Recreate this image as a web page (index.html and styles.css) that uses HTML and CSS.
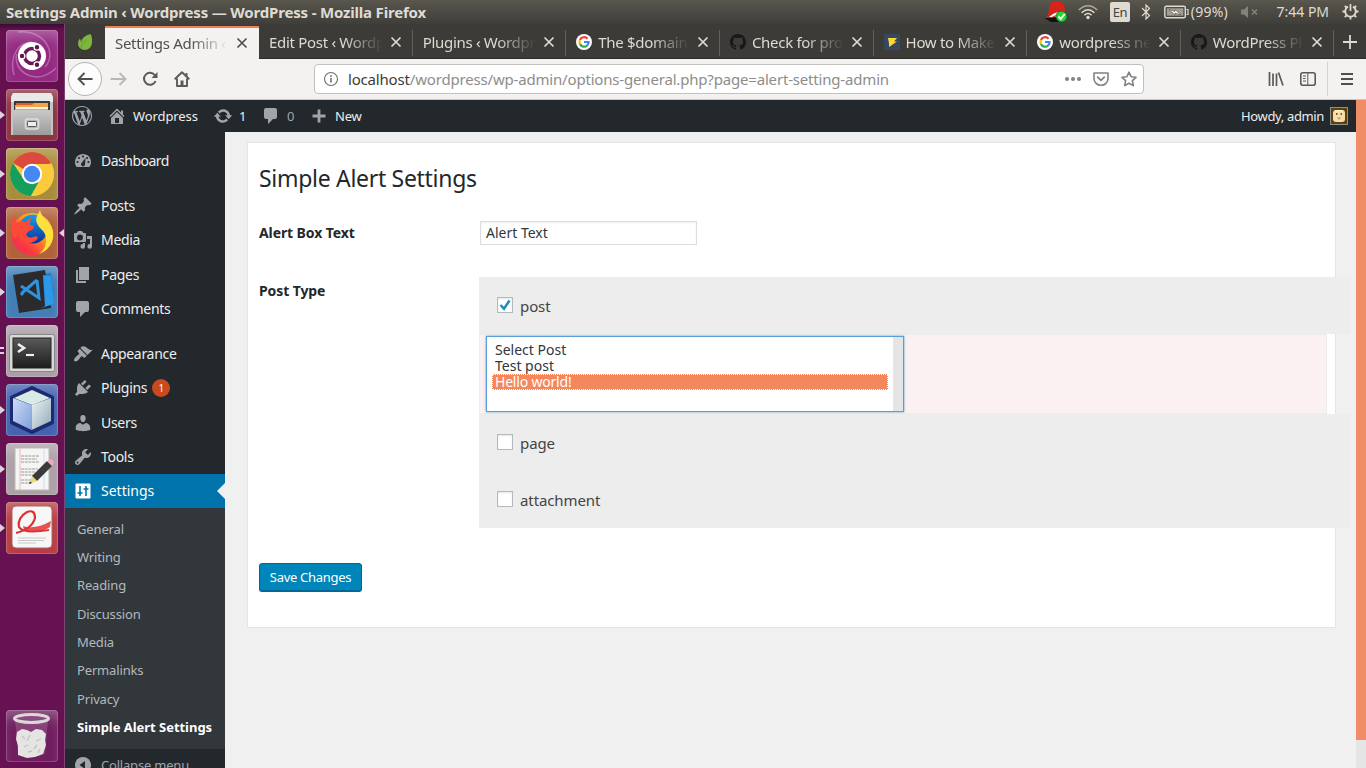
FILE: index.html
```html
<!DOCTYPE html>
<html lang="en">
<head>
<meta charset="utf-8">
<title>Settings Admin ‹ Wordpress — WordPress</title>
<link rel="stylesheet" href="styles.css">
</head>
<body>
<svg class="defs" width="0" height="0" aria-hidden="true">
  <defs>
    <linearGradient id="steel" x1="0" y1="0" x2="0" y2="1"><stop offset="0" stop-color="#c9c9c9"/><stop offset="1" stop-color="#9b9b9b"/></linearGradient>
    <linearGradient id="fox" x1="1" y1="0" x2="0" y2="1"><stop offset="0" stop-color="#fff14c"/><stop offset=".4" stop-color="#ff9a1e"/><stop offset=".7" stop-color="#fb3a3f"/><stop offset="1" stop-color="#f0246e"/></linearGradient>
    <linearGradient id="globe" x1="0" y1="0" x2="0" y2="1"><stop offset="0" stop-color="#18a0e8"/><stop offset="1" stop-color="#0b2f98"/></linearGradient>
    <linearGradient id="cube" x1="0" y1="0" x2="1" y2="1"><stop offset="0" stop-color="#cfdcf5"/><stop offset="1" stop-color="#7f9fdc"/></linearGradient>
    <linearGradient id="cube2" x1="0" y1="0" x2="1" y2="1"><stop offset="0" stop-color="#eef4f4"/><stop offset="1" stop-color="#8fa9b8"/></linearGradient>
    <linearGradient id="term" x1="0" y1="0" x2="0" y2="1"><stop offset="0" stop-color="#5a5a5a"/><stop offset="1" stop-color="#1d1d1d"/></linearGradient>
  </defs>
  <symbol id="i-close" viewBox="0 0 12 12"><path d="M1.500 1.500l9 9M10.500 1.500l-9 9" fill="none" stroke="currentColor" stroke-width="1.700"/></symbol>
  <symbol id="i-google" viewBox="0 0 16 16"><circle cx="8" cy="8" r="8" fill="#fff"/><g fill="none" stroke-width="2.200"><path d="M11.500 4.700A4.600 4.600 0 0 0 3.900 6" stroke="#ea4335"/><path d="M3.900 5.900a4.600 4.600 0 0 0 0 4.200" stroke="#fbbc05"/><path d="M3.900 10a4.600 4.600 0 0 0 7.300 1.500" stroke="#34a853"/><path d="M8 8h4.600a4.600 4.600 0 0 1-1.500 3.600" stroke="#4285f4"/></g></symbol>
  <symbol id="i-github" viewBox="0 0 16 16"><path fill="#191717" d="M8 0C3.580 0 0 3.580 0 8c0 3.540 2.290 6.530 5.470 7.590.4.07.55-.17.55-.38 0-.19-.01-.82-.01-1.490-2.010.37-2.530-.49-2.690-.94-.09-.23-.48-.94-.82-1.130-.28-.15-.68-.52-.01-.53.63-.01 1.080.58 1.230.82.72 1.210 1.870.87 2.330.66.07-.52.28-.87.51-1.070-1.780-.2-3.640-.89-3.640-3.950 0-.87.31-1.590.82-2.150-.08-.2-.36-1.020.08-2.120 0 0 .67-.21 2.200.82.64-.18 1.320-.27 2-.27.68 0 1.360.09 2 .27 1.530-1.040 2.200-.82 2.200-.82.44 1.100.16 1.920.08 2.120.51.56.82 1.270.82 2.150 0 3.070-1.870 3.750-3.650 3.950.29.25.54.73.54 1.480 0 1.070-.01 1.930-.01 2.200 0 .21.15.46.55.38A8.013 8.013 0 0 0 16 8c0-4.420-3.580-8-8-8z"/></symbol>
  <symbol id="i-comment" viewBox="0 0 20 20"><path fill="currentColor" d="M5 2h9q2 0 2 2v7q0 2-2 2h-2l-5 5v-5H5q-2 0-2-2V4q0-2 2-2z"/></symbol>
</svg>

<div class="screen">
  <header class="panel">
    <span class="panel-title">Settings Admin ‹ Wordpress — WordPress - Mozilla Firefox</span>
    <svg class="ind ind-hat" width="24" height="24" viewBox="0 0 24 24"><path d="M2 18Q5 14 5 8q1-7 7.500-7 7 0 8.500 8l1 7-6 4H6z" fill="#d8231b"/><path d="M1 18.500q2-1 5-.5l7-1 4 5H7z" fill="#111"/><path d="M5 17q4-4 9-5l1 4-4 1 1-2-4 2z" fill="#fff"/><circle cx="17.500" cy="16.500" r="5.500" fill="#26d335" stroke="#0b5b12" stroke-width=".8"/><path d="M14.500 16.500l2.200 2.500 4-5" stroke="#fff" stroke-width="2" fill="none"/></svg>
    <svg class="ind ind-wifi" width="20" height="16" viewBox="0 0 20 16"><g fill="none" stroke="#dfdbd2" stroke-width="1.400"><path d="M.8 6Q10-2.500 19.200 6" opacity=".65"/><path d="M3.600 8.700q6.400-6 12.800 0"/><path d="M6.400 11.300q3.600-3.400 7.200 0"/></g><circle cx="10" cy="13.500" r="1.700" fill="#dfdbd2"/></svg>
    <span class="ind-lang">En</span>
    <svg class="ind ind-bt" width="10" height="16" viewBox="0 0 10 16"><path d="M1 4l7.500 7.500L5 15V1l3.500 3.500L1 12" fill="none" stroke="#dfdbd2" stroke-width="1.200"/></svg>
    <svg class="ind ind-batt" width="25" height="14" viewBox="0 0 25 14"><rect x=".8" y="1.300" width="20.500" height="11.400" rx="1.500" fill="none" stroke="#dfdbd2" stroke-width="1.400"/><rect x="2.800" y="3.300" width="16.500" height="7.400" fill="#a09d94"/><path d="M22.500 4.500H24v5h-1.500" fill="none" stroke="#dfdbd2" stroke-width="1.200"/><path d="M5 4.500l6 2V4.500l6 5.500-6-2v2z" fill="#fff" stroke="#4a4943" stroke-width=".6"/></svg>
    <span class="ind-pct">(99%)</span>
    <svg class="ind ind-vol" width="18" height="14" viewBox="0 0 18 14"><path d="M0 4.500h3L7 1v12L3 9.500H0z" fill="#85827b"/><path d="M11 4.500l5 5m0-5l-5 5" stroke="#85827b" stroke-width="1.500"/></svg>
    <span class="ind-time">7:44 PM</span>
    <svg class="ind ind-gear" width="17" height="17" viewBox="0 0 17 17"><g stroke="#dfdbd2" fill="none"><path d="M6 3.700a5.300 5.300 0 1 0 5 0" stroke-width="1.900"/><path d="M8.500 1v7" stroke-width="1.700"/><path d="M.5 8.500h3m10 0h3M2.800 14.200l2-2m7.400 0l2 2M8.500 13.500v3M2.800 2.800l2 2m9.400-2l-2 2" stroke-width="1.800"/></g></svg>
  </header>

  <div class="workspace">
    <nav class="launcher">
      <div class="tile t-ubuntu"><svg viewBox="0 0 52 52"><g fill="none" stroke="#fff" opacity=".28" stroke-width="1.500"><path d="M12 2c18-2 32 9 32 24q-1 7-5 11"/><path d="M50 38c-14 14-31 10-38-2q-3-7-1-12"/><path d="M8 45C3 27 12 12 26 12"/></g><circle cx="26" cy="26" r="14" fill="#fff"/><circle cx="26" cy="26" r="7.500" fill="none" stroke="#6a1a58" stroke-width="3.400"/><g fill="#5e1750" stroke="#fff" stroke-width="1.300"><circle cx="16" cy="26" r="2.900"/><circle cx="31" cy="17.300" r="2.900"/><circle cx="31" cy="34.700" r="2.900"/></g></svg></div>
      <div class="tile t-files"><i class="run"></i><svg viewBox="0 0 52 52"><path d="M7 4h38l2 4v38H5V8z" fill="#c4c4c4"/><path d="M5 8l2-4h38l2 4v5H5z" fill="#e9e9e9"/><path d="M8 12h36v11H8z" fill="#3c3a39"/><path d="M10 14h32v9H10z" fill="#db5c2c"/><path d="M9 16h17l2-2h14v9H9z" fill="#f2a44a"/><path d="M10 18h32v2H10z" fill="#fff1dc"/><path d="M7 21h38v25H7z" fill="url(#steel)"/><rect x="19.500" y="30" width="13" height="10" rx="2" fill="#b4b4b4" stroke="#dedede" stroke-width="1.500"/><rect x="21.500" y="32.500" width="9" height="5" rx="1" fill="#eee" stroke="#555"/></svg></div>
      <div class="tile t-chrome"><i class="run"></i><svg viewBox="0 0 52 52"><circle cx="26" cy="26" r="22" fill="#fbc93b"/><path d="M26 26L7 15a22 22 0 0 1 38-0z" fill="#db4a3e"/><path d="M7 15a22 22 0 0 0 18 33l9.500-17L26 26l-8.500 5z" fill="#159f5c"/><path d="M26 16h19.500a22 22 0 0 1-20.500 32l9.500-17z" fill="#fcca3d"/><circle cx="26" cy="26" r="10.200" fill="#fff"/><circle cx="26" cy="26" r="8.200" fill="#4688f1"/></svg></div>
      <div class="tile t-firefox"><i class="run"></i><i class="focus"></i><svg viewBox="0 0 52 52"><circle cx="26" cy="27" r="21" fill="url(#fox)"/><circle cx="27" cy="22" r="14.500" fill="url(#globe)"/><path d="M10 8q-1 5 1 8 4-3 9-1 2-4 6-4-3 4-2 7 3 0 4 2-1 3-5 4l-3 3q2 5 7 3 4-2 5 1-3 5-10 5-8-1-10-9-3 8-6 0Q3 15 10 8z" fill="#fb4a38"/><path d="M34 3q1 6 8 12 8 9 4 20-4 9-13 12 8-6 7-16-1-6-5-9-7-7-4-13z" fill="#ffdf3b"/></svg></div>
      <div class="tile t-code"><i class="run"></i><svg viewBox="0 0 52 52"><path d="M36 8l9-1 3 31-9 4z" fill="#1c7cc9"/><path d="M7 9l32-5 6 38-32 5z" fill="#2b2b2d"/><path d="M37 9l8 1 3 28-13 4 4-2z" fill="#2b98ea"/><path d="M31 14L16 27m-1-7l18 12-2-18M15 29l3-4" fill="none" stroke="#2f93dd" stroke-width="3"/></svg></div>
      <div class="tile t-term"><i class="run run2"></i><svg viewBox="0 0 52 52"><rect x="3.500" y="9.500" width="45" height="37" rx="2" fill="#d8d8d6" stroke="#888"/><rect x="7" y="13" width="38" height="30" fill="url(#term)" stroke="#222"/><path d="M12 19l6 4-6 4" fill="none" stroke="#eee" stroke-width="2.600"/><path d="M20 30h8" stroke="#eee" stroke-width="2.200"/></svg></div>
      <div class="tile t-cube"><i class="run"></i><svg viewBox="0 0 52 52"><path d="M26 3l21 10v26L26 49 5 39V13z" fill="#1d2b72" stroke="#1d2b72" stroke-width="2" stroke-linejoin="round"/><path d="M26 6l18 8-18 7L8 14z" fill="#d8ebe7"/><path d="M7 14l18.500 7v25L7 37z" fill="url(#cube)"/><path d="M45 14l-19.500 7v25L45 37z" fill="url(#cube2)"/></svg></div>
      <div class="tile t-edit"><i class="run"></i><svg viewBox="0 0 52 52"><path d="M9 5h34v42H9z" fill="#f5f5f4" stroke="#bdbab8"/><path d="M14 5v42" stroke="#f0b9b9"/><path d="M38 5v42" stroke="#cfdcf3"/><path d="M15 13h18M15 16h16M15 19h18M15 26h17M15 29h14M15 32h17M15 37h12M15 40h10" stroke="#9b9b9b" stroke-width="1.200" stroke-dasharray="3 .7"/><path d="M41 18l5 5-15 15-5-5z" fill="#3a3a3a"/><path d="M41 18l3-2q3 0 4 4l-2 3z" fill="#f0a6c4"/><path d="M26 33l5 5-8 3z" fill="#ecd872"/><path d="M24 38.500l2 1.500-3 1z" fill="#222"/></svg></div>
      <div class="tile t-pdf"><i class="run"></i><svg viewBox="0 0 52 52"><rect x="6" y="4" width="40" height="42" rx="4" fill="#f7f7f7" stroke="#a66"/><path d="M10 31Q26 27 29 16 29 7 21 10q-10 6-8 15 4 7 30 3" fill="none" stroke="#dd3232" stroke-width="2.200"/><path d="M17 24q12 4 28-5l-1 6q-12 8-26 3z" fill="#e23535" opacity=".85"/><path d="M12 36h28M12 38.500h26M12 41h18" stroke="#c9c9c9"/></svg></div>
      <div class="tile t-trash"><svg viewBox="0 0 52 52"><path d="M9 10h33l-3 34q-13 5-27 0z" fill="#c9a9c3" opacity=".25"/><path d="M11 22l5-3 5 1 4 2 5-3 6 1 4 4-1 6 1 5-3 9-8 3-8 1-9-3 0-9-2-7z" fill="#e4e4e2"/><path d="M16 26l3 3M24 25l-3 6M30 31l5-2M18 37l4-2M28 39l3-4M22 42l4-1M34 39l-2 4" stroke="#c2c2c2" fill="none" stroke-width="1.300"/><ellipse cx="25.500" cy="8.500" rx="17" ry="4" fill="#8d4a80" stroke="#d9d9d8" stroke-width="3"/></svg></div>
    </nav>

    <main class="browser">
      <div class="tabstrip">
        <div class="tab pinned"><svg width="16" height="18" viewBox="0 0 16 18"><path d="M13.500 1Q15.500 4 15 10q-1 7-7.500 7Q1 16 1 10q0-3 2-4.500Q4 8 4 9.500 5 3 13.500 1z" fill="#7db53e"/><path d="M4 15q1-5 5.500-8.500" stroke="#5c972c" stroke-width=".7" fill="none"/></svg></div>
        <div class="tab active"><span class="label">Settings Admin ‹</span><svg class="x" width="12" height="12"><use href="#i-close"/></svg></div>
        <div class="tab"><span class="label">Edit Post ‹ Wordp</span><svg class="x" width="12" height="12"><use href="#i-close"/></svg></div>
        <div class="tab"><span class="label">Plugins ‹ Wordpr</span><svg class="x" width="12" height="12"><use href="#i-close"/></svg></div>
        <div class="tab"><svg class="fav" width="16" height="16"><use href="#i-google"/></svg><span class="label">The $domain</span><svg class="x" width="12" height="12"><use href="#i-close"/></svg></div>
        <div class="tab"><svg class="fav" width="16" height="16"><use href="#i-github"/></svg><span class="label">Check for pro</span><svg class="x" width="12" height="12"><use href="#i-close"/></svg></div>
        <div class="tab"><svg class="fav" width="16" height="16" viewBox="0 0 16 16"><path d="M0 0h16v16H0z" fill="#34495e"/><path d="M4 4h9l-3 3.500h3L5 13V9.500z" fill="#ffd53e"/></svg><span class="label">How to Make</span><svg class="x" width="12" height="12"><use href="#i-close"/></svg></div>
        <div class="tab"><svg class="fav" width="16" height="16"><use href="#i-google"/></svg><span class="label">wordpress ne</span><svg class="x" width="12" height="12"><use href="#i-close"/></svg></div>
        <div class="tab"><svg class="fav" width="16" height="16"><use href="#i-github"/></svg><span class="label">WordPress Pl</span><svg class="x" width="12" height="12"><use href="#i-close"/></svg></div>
        <div class="newtab"><svg width="14" height="14" viewBox="0 0 14 14"><path d="M7 0v14M0 7h14" stroke="#dfdbd2" stroke-width="1.800"/></svg></div>
      </div>

      <div class="toolbar">
        <div class="back"><svg width="16" height="16" viewBox="0 0 16 16"><path d="M15.500 8H1.500M7.500 2l-6 6 6 6" fill="none" stroke="#4f4f4c" stroke-width="1.900"/></svg></div>
        <svg class="fwd" width="17" height="16" viewBox="0 0 17 16"><path d="M.5 8h15M9.500 2l6 6-6 6" fill="none" stroke="#b9b8b6" stroke-width="1.900"/></svg>
        <svg class="reload" width="16" height="16" viewBox="0 0 16 16"><path d="M13 4.500A6 6 0 1 0 13.600 10" fill="none" stroke="#5b5a58" stroke-width="2"/><path d="M15.500 1v6h-6z" fill="#5b5a58"/></svg>
        <svg class="home" width="16" height="16" viewBox="0 0 16 16"><path d="M.7 8.200L8 1.200l7.300 7M3 7.500V15h10V7.500" fill="none" stroke="#5b5a58" stroke-width="1.900" stroke-linejoin="round"/><path d="M6.500 9.500h3V15h-3zM11.500 2h2v3h-2z" fill="#5b5a58"/></svg>
        <div class="urlbar">
          <svg width="16" height="16" viewBox="0 0 16 16"><circle cx="8" cy="8" r="6.500" fill="none" stroke="#6e6e6c" stroke-width="1.100"/><path d="M8 7v4.500M8 4.200v1.700" stroke="#6e6e6c" stroke-width="1.600"/></svg>
          <span class="url"><b>localhost</b>/wordpress/wp-admin/options-general.php?page=alert-setting-admin</span>
          <svg class="dots" width="16" height="4" viewBox="0 0 16 4"><g fill="#82817f"><circle cx="2" cy="2" r="2"/><circle cx="8" cy="2" r="2"/><circle cx="14" cy="2" r="2"/></g></svg>
          <svg width="16" height="16" viewBox="0 0 16 16"><path d="M1 2h14v5.500a7 6.800 0 0 1-14 0z" fill="none" stroke="#82817f" stroke-width="1.600" stroke-linejoin="round"/><path d="M4.700 6.200L8 9.300l3.300-3.100" fill="none" stroke="#82817f" stroke-width="1.800" stroke-linecap="round"/></svg>
          <svg width="16" height="16" viewBox="0 0 16 16"><path d="M8 1.200l2.100 4.500 4.900.6-3.600 3.400.9 4.900L8 12.200l-4.300 2.400.9-4.900L1 6.300l4.900-.6z" fill="none" stroke="#82817f" stroke-width="1.600" stroke-linejoin="round"/></svg>
        </div>
        <svg class="lib" width="16" height="14" viewBox="0 0 16 14"><path d="M1.500 0v14M5 1.500V14M8.500 1.500V14M10.500.5L15 13.500" stroke="#5b5a58" stroke-width="1.700"/></svg>
        <svg class="side" width="16" height="14" viewBox="0 0 16 14"><rect x=".8" y=".8" width="14.400" height="12.400" rx="2" fill="none" stroke="#5b5a58" stroke-width="1.600"/><path d="M7.800 1v12M3 4h3M3 6.500h2.500M3 9h3" stroke="#5b5a58" stroke-width="1"/></svg>
        <div class="burger"><svg width="12" height="12" viewBox="0 0 12 12"><path d="M0 1h12M0 6h12M0 11h12" stroke="#4f4f4c" stroke-width="1.800"/></svg></div>
      </div>

      <div class="viewport">
        <div class="page">
          <div class="adminbar">
            <svg class="ab-wp" width="20" height="20" viewBox="0 0 20 20"><path fill="#a0a5aa" d="M20 10c0-5.510-4.490-10-10-10C4.480 0 0 4.490 0 10c0 5.520 4.480 10 10 10 5.510 0 10-4.480 10-10zM7.780 15.370L4.370 6.220c.55-.02 1.170-.08 1.170-.08.5-.06.44-1.130-.06-1.110 0 0-1.450.11-2.370.11-.18 0-.37 0-.58-.01C4.120 2.690 6.870 1.110 10 1.110c2.330 0 4.450.87 6.050 2.340-.68-.11-1.650.39-1.650 1.580 0 .74.45 1.360.9 2.100.35.61.55 1.360.55 2.460 0 1.490-1.400 5-1.400 5l-3.030-8.370c.54-.02.82-.17.82-.17.5-.05.44-1.250-.06-1.220 0 0-1.440.12-2.380.12-.87 0-2.330-.12-2.330-.12-.5-.03-.56 1.200-.06 1.220l.92.08 1.260 3.410zM17.410 10c.24-.64.74-1.870.43-4.250.7 1.290 1.050 2.710 1.050 4.250 0 3.290-1.730 6.240-4.400 7.780.97-2.590 1.940-5.200 2.920-7.780zM6.100 18.090C3.120 16.650 1.110 13.530 1.110 10c0-1.300.23-2.480.72-3.590C3.250 10.300 4.670 14.200 6.100 18.090zm4.030-6.630l2.580 6.980c-.86.29-1.760.45-2.710.45-.79 0-1.570-.11-2.290-.33.81-2.380 1.620-4.740 2.420-7.100z"/></svg>
            <svg class="ab-home" width="20" height="20" viewBox="0 0 20 20"><path fill="#a0a5aa" d="M16 8.500l1.530 1.530-1.060 1.060L10 4.600l-6.470 6.490-1.060-1.060L10 2.500l4 4v-2h2v4zm-6-2.460l6 5.990V18H4v-5.970zM12 17v-5H8v5h4z"/></svg>
            <span class="ab-site">Wordpress</span>
            <svg class="ab-upd" width="20" height="20" viewBox="0 0 20 20"><path fill="#a0a5aa" d="M10.200 3.280c3.530 0 6.430 2.610 6.920 6h2.080l-3.500 4-3.500-4h2.320c-.45-1.970-2.210-3.450-4.320-3.450-1.450 0-2.730.71-3.540 1.780L4.950 5.660C6.230 4.200 8.110 3.280 10.200 3.280zm-.4 13.440c-3.520 0-6.430-2.610-6.920-6H.8l3.500-4c1.170 1.330 2.330 2.670 3.500 4H5.480c.45 1.970 2.210 3.450 4.320 3.450 1.450 0 2.730-.71 3.540-1.780l1.710 1.950c-1.280 1.460-3.150 2.380-5.250 2.380z"/></svg>
            <span class="ab-one">1</span>
            <svg class="ab-com" width="20" height="20"><use href="#i-comment"/></svg>
            <span class="ab-zero">0</span>
            <svg class="ab-plus" width="14" height="14" viewBox="0 0 14 14"><path d="M7 .5v13M.5 7h13" stroke="#a0a5aa" stroke-width="2.800"/></svg>
            <span class="ab-new">New</span>
            <span class="ab-howdy">Howdy, admin</span>
            <svg class="ab-avatar" width="18" height="18" viewBox="0 0 18 18"><rect x=".5" y=".5" width="17" height="17" fill="#5c4206" stroke="#8c8f94"/><rect x="3" y="3" width="12" height="12" rx="3" fill="#f8dda6"/><path d="M5 3h8v1.500H5z" fill="#fff3cf"/><path d="M6 6h1.500v2H6zM10.500 6H12v2h-1.500z" fill="#6e5a38"/><rect x="7.500" y="10" width="3" height="2.500" rx="1" fill="#a9adb0"/></svg>
          </div>

          <div class="wp">
            <aside class="menu">
              <a class="item first"><svg viewBox="0 0 20 20"><path fill="currentColor" d="M3.760 16h12.480c1.100-1.370 1.760-3.110 1.760-5 0-4.420-3.580-8-8-8s-8 3.580-8 8c0 1.890.66 3.630 1.760 5z"/><g fill="#23282d"><circle cx="10" cy="5.500" r="1.100"/><circle cx="6" cy="7" r="1.100"/><circle cx="14" cy="7" r="1.100"/><circle cx="4.500" cy="11" r="1.100"/><circle cx="15.500" cy="11" r="1.100"/><path d="M12.500 7l-.5 6.500a2 2 0 1 1-3.500-1.500z"/></g></svg>Dashboard</a>
              <div class="sep"></div>
              <a class="item"><svg viewBox="0 0 20 20"><path fill="currentColor" d="M10.440 3.020l1.820-1.820 6.360 6.350-1.830 1.820c-1.050-.68-2.480-.57-3.410.36l-.75.75c-.92.93-1.040 2.350-.35 3.410l-1.830 1.820-2.410-2.410-2.800 2.790c-.42.42-3.380 2.710-3.800 2.290s1.860-3.390 2.280-3.810l2.790-2.790L4.100 9.360l1.830-1.820c1.050.69 2.480.57 3.400-.36l.75-.75c.93-.92 1.050-2.350.36-3.410z"/></svg>Posts</a>
              <a class="item"><svg viewBox="0 0 20 20"><path fill="currentColor" fill-rule="evenodd" d="M13 11V4c0-.55-.45-1-1-1h-1.670L9 1H5L3.670 3H2c-.55 0-1 .45-1 1v7c0 .55.45 1 1 1h10c.55 0 1-.45 1-1zM7 4.500a3 3 0 1 1 0 6 3 3 0 0 1 0-6zM14 6h5v10.500a2.300 2.300 0 1 1-2-2.400V9h-3zm-4 8h0V13h2v3.500a2.300 2.300 0 1 1-2-2.400z"/></svg>Media</a>
              <a class="item"><svg viewBox="0 0 20 20"><path fill="currentColor" d="M6 15V2h10v13H6zm-1 1h8v2H3V5h2v11z"/></svg>Pages</a>
              <a class="item"><svg><use href="#i-comment"/></svg>Comments</a>
              <div class="sep"></div>
              <a class="item"><svg viewBox="0 0 20 20"><path fill="currentColor" d="M14.480 11.060L7.410 3.990l1.500-1.500c.5-.56 2.300-.47 3.510.32 1.210.8 1.430 1.280 2.910 2.100 1.180.64 2.450 1.260 4.450.85zm-.71.71L6.700 4.700 4.930 6.470c-.39.39-.39 1.020 0 1.410l1.060 1.060c.39.39.39 1.030 0 1.420-.6.6-1.430 1.110-2.210 1.690-.35.26-.7.53-1.010.84C1.430 14.230.4 16.080 1.400 17.070c.99 1 2.840-.03 4.180-1.360.31-.31.58-.66.85-1.020.57-.78 1.080-1.610 1.690-2.210.39-.39 1.020-.39 1.410 0l1.060 1.060c.39.39 1.020.39 1.410 0z"/></svg>Appearance</a>
              <a class="item"><svg viewBox="0 0 20 20"><path fill="currentColor" d="M13.110 4.360L9.870 7.600 8 5.730l3.240-3.240c.35-.34 1.050-.2 1.560.32.52.51.66 1.210.31 1.550zm-8 1.770l.91-1.120 9.010 9.010-1.190.84c-.71.71-2.630 1.160-3.820 1.160H6.140L4.900 17.260c-.59.59-1.540.59-2.120 0-.59-.58-.59-1.530 0-2.120l1.240-1.240v-3.880c0-1.130.4-3.190 1.090-3.890zm7.260 3.970l3.240-3.240c.34-.35 1.040-.21 1.550.31.52.51.66 1.210.31 1.550l-3.240 3.250z"/></svg>Plugins<span class="badge">1</span></a>
              <a class="item"><svg viewBox="0 0 20 20"><path fill="currentColor" d="M10 9.250c-2.270 0-2.730-3.440-2.730-3.440C7 4.020 7.820 2 9.970 2c2.160 0 2.980 2.020 2.710 3.810 0 0-.41 3.440-2.680 3.440zm0 2.570L12.720 10c2.390 0 4.520 2.330 4.520 4.530v2.490s-3.650 1.130-7.240 1.130c-3.650 0-7.240-1.130-7.240-1.130v-2.490c0-2.250 1.940-4.480 4.470-4.480z"/></svg>Users</a>
              <a class="item"><svg viewBox="0 0 20 20"><path fill="currentColor" fill-rule="evenodd" d="M16.680 9.770c-1.340 1.340-3.300 1.670-4.950.99l-5.410 6.520c-.99.99-2.590.99-3.580 0s-.99-2.590 0-3.570l6.520-5.420c-.68-1.650-.35-3.610.99-4.950 1.280-1.280 3.120-1.620 4.720-1.060l-2.890 2.890 2.820 2.820 2.860-2.870c.53 1.580.18 3.390-1.080 4.650zM3.810 16.210c.4.390 1.040.39 1.430 0 .4-.4.4-1.040 0-1.430-.39-.4-1.030-.4-1.430 0-.39.39-.39 1.030 0 1.430z"/></svg>Tools</a>
              <a class="item current"><svg viewBox="0 0 20 20"><path fill="currentColor" d="M17.500 16.500v-13q0-1-1-1h-13q-1 0-1 1v13q0 1 1 1h13q1 0 1-1z"/><path d="M7 5v10M4.500 12h5M13 5v10M10.500 8h5" stroke="#0073aa" stroke-width="1.600"/></svg>Settings</a>
              <div class="submenu">
                <a>General</a><a>Writing</a><a>Reading</a><a>Discussion</a><a>Media</a><a>Permalinks</a><a>Privacy</a><a class="on">Simple Alert Settings</a>
              </div>
              <a class="collapse"><svg width="16" height="16" viewBox="0 0 16 16"><circle cx="8" cy="8" r="8" fill="#a0a5aa"/><path d="M10 4v8L4.500 8z" fill="#23282d"/></svg>Collapse menu</a>
            </aside>

            <section class="content">
              <div class="card">
                <h1>Simple Alert Settings</h1>
                <div class="row row-text">
                  <label>Alert Box Text</label>
                  <div class="textfield">Alert Text</div>
                </div>
                <div class="row row-type">
                  <label>Post Type</label>
                  <div class="types">
                    <div class="type"><span class="box"><svg width="12" height="12" viewBox="0 0 12 12"><path d="M1.500 6l3.500 3.700L10.500 1.500" fill="none" stroke="#1e8cbe" stroke-width="2.500"/></svg></span>post</div>
                    <div class="posts">
                      <div class="list"><div class="options"><span>Select Post</span><span>Test post</span><span class="sel">Hello world!</span></div><div class="track"></div></div>
                    </div>
                    <div class="type"><span class="box"></span>page</div>
                    <div class="type"><span class="box"></span>attachment</div>
                  </div>
                </div>
                <div class="save">Save Changes</div>
              </div>
            </section>
          </div>
        </div>
        <div class="scrollbar"><div class="thumb"></div></div>
      </div>
    </main>
  </div>
</div>
</body>
</html>
```

FILE: styles.css
```css
* { box-sizing: border-box; }
body { margin: 0; font-family: "Noto Sans", "Open Sans", sans-serif; }
svg { display: block; flex: none; }
.defs { position: absolute; }
.screen { width: 1366px; height: 768px; overflow: hidden; display: flex; flex-direction: column; }

/* Desktop panel */
.panel { height: 24px; flex: none; display: flex; align-items: center; padding: 0 7px 1px 6px; background: linear-gradient(#5b594d, #54524a 15%, #3f3e39); color: #dfdbd2; font-size: 14px; white-space: nowrap; }
.panel-title { font-weight: 700; font-size: 15px; width: 1038px; flex: none; letter-spacing: -.18px; }
.ind-wifi { margin-left: 10px; }
.ind-lang { margin: 1px 0 0 12px; width: 20px; height: 20px; border-radius: 2px; background: #dfdbd2; color: #45443f; font-size: 13px; line-height: 20px; text-align: center; letter-spacing: -.5px; }
.ind-bt { margin-left: 11px; }
.ind-batt { margin-left: 13px; }
.ind-pct { margin-left: 2px; width: 39px; letter-spacing: .2px; }
.ind-vol { margin-left: 12px; }
.ind-time { margin-left: 17px; width: 54px; }
.ind-gear { margin-left: 12px; }

.workspace { flex: 1; display: flex; min-height: 0; }

/* Launcher */
.launcher { width: 65px; flex: none; padding: 6px 6px 6px; display: flex; flex-direction: column; gap: 7px; background: linear-gradient(#3b0a36, #65104f 6px, #651152 50%, #651152); border-right: 1px solid #7f4474; }
.tile { position: relative; width: 52px; height: 52px; border-radius: 4px; flex: none; box-shadow: inset 0 0 0 1px rgba(255,255,255,.18), inset 0 12px 14px -6px rgba(255,255,255,.3); }
.tile svg { width: 52px; height: 52px; }
.t-ubuntu { background: #952a83; }
.t-files { background: #8d3340; }
.t-chrome { background: #a98d3c; }
.t-firefox { background: #b2623a; }
.t-code { background: #437eb4; }
.t-term { background: #aa9ea8; }
.t-cube { background: #4564b0; }
.t-edit { background: #ada1a9; }
.t-pdf { background: #b63d43; }
.t-trash { background: rgba(120, 40, 105, .6); margin-top: auto; }
.run { position: absolute; left: -6px; top: 22px; border: 4px solid transparent; border-left: 5px solid #ddd3dc; border-right: 0; }
.run2 { border: solid #ddd3dc; border-width: 2px 0; height: 7px; width: 4px; }
.focus { position: absolute; right: -6px; top: 22px; border: 4px solid transparent; border-right: 5px solid #ddd3dc; border-left: 0; }

/* Browser chrome */
.browser { flex: 1; min-width: 0; display: flex; flex-direction: column; }
.tabstrip { height: 35px; flex: none; display: flex; align-items: flex-end; background: #3c3b37; border-bottom: 1px solid #2b2a27; color: #dfdbd2; }
.tab { width: 153.650px; height: 32px; flex: none; display: flex; align-items: center; padding: 0 10px 0 10px; font-size: 15px; border-right: 1px solid transparent; border-image: linear-gradient(transparent 5px, #62605a 5px, #62605a 29px, transparent 29px) 1; border-width: 0 1px 0 0; }
.tab.pinned { width: 40px; padding: 0 0 0 12px; border: 0; }
.tab.active { width: 154px; height: 33px; margin-bottom: -1px; background: #f3f2f1; border: 0; border-top: 2px solid #f08052; color: #4f4f4c; padding: 0 11px 2px 10px; }
.label { flex: 1; min-width: 0; margin-right: 6px; white-space: nowrap; letter-spacing: -.3px; -webkit-mask-image: linear-gradient(90deg, #000 calc(100% - 40px), transparent 99%); mask-image: linear-gradient(90deg, #000 calc(100% - 40px), transparent 99%); }
.fav { margin-right: 6px; }
.newtab { height: 32px; display: flex; align-items: center; padding-left: 9px; }

.toolbar { height: 41px; flex: none; display: flex; align-items: center; background: #f3f2f1; border-bottom: 1px solid #c9c7c4; padding-left: 3px; }
.back { width: 34px; height: 34px; border: 1px solid #b4b3b0; border-radius: 50%; background: #fcfcfc; display: flex; align-items: center; justify-content: center; }
.fwd { margin-left: 8px; }
.reload { margin-left: 15px; }
.home { margin-left: 16px; }
.urlbar { margin-left: 124px; width: 830px; height: 30px; background: #fff; border: 1px solid #c2c0bd; border-radius: 4px; display: flex; align-items: center; gap: 12px; padding: 0 6px 0 8px; }
.url { flex: 1; margin-left: -3px; font-size: 15px; color: #8e8d8b; white-space: nowrap; letter-spacing: -.18px; }
.url b { font-weight: 400; color: #3c3b37; }
.lib { margin-left: 124px; }
.side { margin-left: 16px; }
.burger { margin-left: 11px; height: 34px; border-left: 1px solid #d5d3d0; padding-left: 13px; display: flex; align-items: center; }

/* Page */
.viewport { flex: 1; min-height: 0; display: flex; background: #f0f0f0; }
.page { flex: 1; min-width: 0; display: flex; flex-direction: column; }
.scrollbar { width: 10px; background: #e5e5e5; }
.thumb { height: 640px; background: #f08c66; }
.adminbar { height: 32px; flex: none; background: #23282d; color: #eee; display: flex; align-items: center; padding: 0 8px 0 7px; font-size: 13px; white-space: nowrap; }
.ab-home { margin-left: 15px; }
.ab-site { margin-left: 6px; width: 74px; letter-spacing: -.1px; }
.ab-upd { margin-left: 6px; }
.ab-one { margin-left: 6px; width: 14px; }
.ab-com { margin-left: 8px; color: #a0a5aa; }
.ab-zero { margin-left: 6px; width: 18px; color: #a0a5aa; }
.ab-plus { margin-left: 7px; }
.ab-new { margin-left: 9px; letter-spacing: -.2px; }
.ab-howdy { margin-left: auto; width: 84px; letter-spacing: -.35px; }
.ab-avatar { margin-left: 5px; }

.wp { flex: 1; min-height: 0; display: flex; }
.menu { width: 160px; flex: none; overflow: hidden; background: #23282d; padding-top: 11.750px; }
.item { height: 34.250px; display: flex; align-items: center; padding: 0 0 1px 8px; gap: 8px; font-size: 14px; letter-spacing: -.3px; color: #eee; }
.item svg { width: 20px; height: 20px; margin-top: 1px; color: #a0a5aa; }
.item.first { letter-spacing: -.5px; padding-bottom: 0; }
.sep { height: 11px; }
.badge { width: 18px; height: 18px; margin: 1px 0 0 -3px; border-radius: 50%; background: #ca4a1f; color: #fff; font-size: 10px; line-height: 18px; text-align: center; }
.current { position: relative; background: #0073aa; color: #fff; letter-spacing: 0; }
.current svg { color: #fff; }
.current::after { content: ""; position: absolute; right: 0; top: 9px; border: 8px solid transparent; border-right-color: #f0f0f0; border-left: 0; }
.submenu { background: #32373c; padding: 6.500px 0 8px; }
.submenu a { display: block; height: 28.300px; line-height: 28.300px; padding-left: 12px; font-size: 13px; letter-spacing: -.15px; color: #b4b9be; white-space: nowrap; }
.submenu .on { color: #fff; font-weight: 700; letter-spacing: -.03px; }
.collapse { display: flex; align-items: center; height: 31px; padding-left: 10px; gap: 10px; font-size: 13px; letter-spacing: -.2px; color: #a0a5aa; }

.content { flex: 1; min-width: 0; padding: 10px 20px 0 22px; }
.card { height: 486px; background: #fff; border: 1px solid #e5e5e5; padding: 19px 9px 0 11px; color: #23282d; }
h1 { margin: 0; font-size: 23px; font-weight: 400; line-height: 33px; height: 59px; letter-spacing: -.3px; }
.row { display: grid; grid-template-columns: 220px 1fr; font-size: 14px; }
.row label { font-weight: 700; line-height: 24px; letter-spacing: -.1px; }
.row-text { height: 56px; }
.textfield { margin-left: 1px; width: 217px; height: 24px; border: 1px solid #ddd; box-shadow: inset 0 1px 2px rgba(0,0,0,.07); padding-left: 5px; line-height: 22px; color: #32373c; }
.row-type label { padding-top: 2px; }
.types { width: 871px; }
.type { height: 57px; background: #ededed; display: flex; align-items: center; padding: 0 0 0 18px; font-size: 15px; letter-spacing: -.1px; color: #444; }
.box { width: 16px; height: 16px; margin: -1px 7px 0 0; border: 1px solid #b4b9be; background: #fff; box-shadow: inset 0 1px 2px rgba(0,0,0,.1); padding: 1px; }
.posts { width: 848px; height: 80px; border: 1px solid #ededed; background: #fbf1f2; padding: 1px 0 0 6px; }
.list { width: 418px; height: 76px; display: flex; background: #fff; border: 1px solid #5b9dd9; box-shadow: 0 0 2px rgba(30,140,190,.8); font-size: 14px; color: #32373c; }
.options { flex: 1; padding: 5px; display: flex; flex-direction: column; }
.options span { height: 16px; line-height: 16px; padding-left: 3px; }
.options .sel { padding-left: 2px; line-height: 14px; letter-spacing: -.2px; background: #f4875c; border: 1px dotted #fff; color: #fff; }
.track { width: 10px; background: #e5e5e5; }
.save { margin-top: 35px; width: 103px; height: 28px; border: 1px solid #006799; border-radius: 3px; background: #0085ba; box-shadow: 0 1px 0 #006799; color: #fff; font-size: 13px; letter-spacing: -.3px; line-height: 26px; text-align: center; white-space: nowrap; }
```
